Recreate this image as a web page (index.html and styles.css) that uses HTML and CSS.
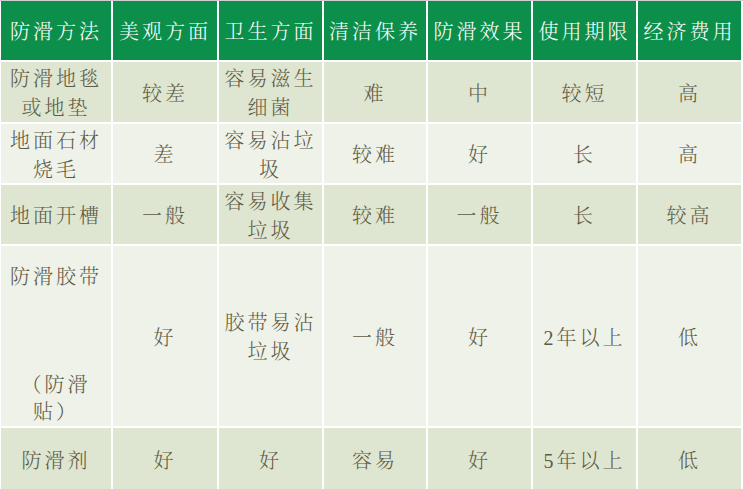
FILE: index.html
```html
<!DOCTYPE html>
<html lang="zh-CN">
<head>
<meta charset="utf-8">
<title>防滑方法对比</title>
<link rel="stylesheet" href="styles.css">
</head>
<body>
<div class="table">
  <div class="cell head">防滑方法</div>
  <div class="cell head">美观方面</div>
  <div class="cell head">卫生方面</div>
  <div class="cell head">清洁保养</div>
  <div class="cell head">防滑效果</div>
  <div class="cell head">使用期限</div>
  <div class="cell head">经济费用</div>

  <div class="cell odd">防滑地毯或地垫</div>
  <div class="cell odd">较差</div>
  <div class="cell odd">容易滋生细菌</div>
  <div class="cell odd">难</div>
  <div class="cell odd">中</div>
  <div class="cell odd">较短</div>
  <div class="cell odd">高</div>

  <div class="cell even">地面石材烧毛</div>
  <div class="cell even">差</div>
  <div class="cell even">容易沾垃圾</div>
  <div class="cell even">较难</div>
  <div class="cell even">好</div>
  <div class="cell even">长</div>
  <div class="cell even">高</div>

  <div class="cell odd">地面开槽</div>
  <div class="cell odd">一般</div>
  <div class="cell odd">容易收集垃圾</div>
  <div class="cell odd">较难</div>
  <div class="cell odd">一般</div>
  <div class="cell odd">长</div>
  <div class="cell odd">较高</div>

  <div class="cell even tall">防滑胶带<br><br><br><br>（防滑贴）</div>
  <div class="cell even">好</div>
  <div class="cell even">胶带易沾垃圾</div>
  <div class="cell even">一般</div>
  <div class="cell even">好</div>
  <div class="cell even">2年以上</div>
  <div class="cell even">低</div>

  <div class="cell odd">防滑剂</div>
  <div class="cell odd">好</div>
  <div class="cell odd">好</div>
  <div class="cell odd">容易</div>
  <div class="cell odd">好</div>
  <div class="cell odd">5年以上</div>
  <div class="cell odd">低</div>
</div>
</body>
</html>
```
FILE: styles.css
```css
html, body {
  margin: 0;
  padding: 0;
  background: #ffffff;
}

body {
  width: 743px;
  height: 489px;
  overflow: hidden;
  border-top: 1px solid #cfcfcf;
  box-sizing: border-box;
}

.table {
  display: grid;
  grid-template-columns: 110px 104px 103px 102px 103px 103px 103px;
  grid-template-rows: 59px 60px 59px 59px 180px 62px;
  gap: 2px;
  margin-left: 1px;
  font-family: "Liberation Serif", "Noto Serif CJK SC", "Noto Sans CJK SC", serif;
  font-size: 20px;
  font-weight: 300;
  letter-spacing: 3px;
  line-height: 29px;
  color: #5e5b45;
}

.cell {
  display: flex;
  align-items: center;
  justify-content: center;
  text-align: center;
  padding: 4px 4px 0;
}

.head {
  background: #0c8f4b;
  color: #ffffff;
  padding-top: 4px;
}

.odd {
  background: #dee6d1;
}

.even {
  background: #eff2e9;
}

.tall {
  line-height: 27px;
  padding-top: 18px;
}
```
